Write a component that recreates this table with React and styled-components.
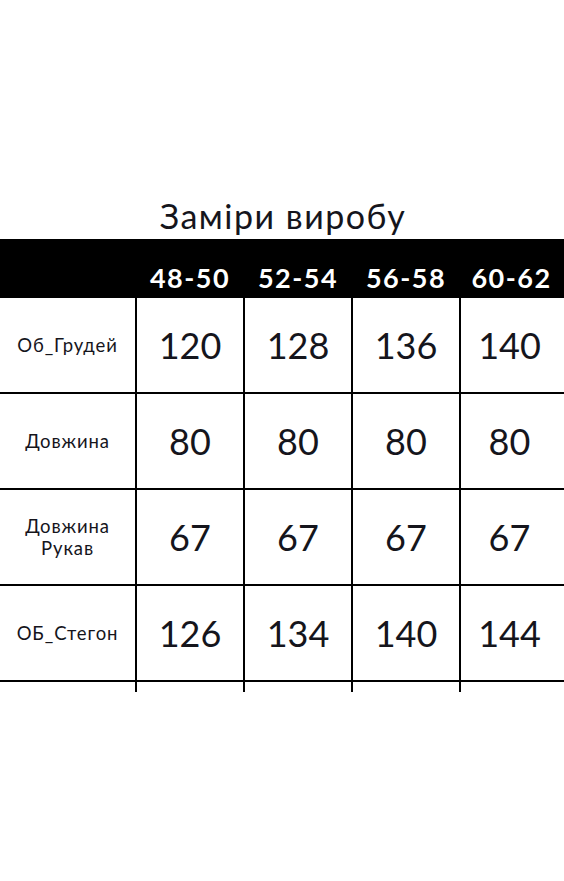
import React from "react";
import styled, { createGlobalStyle } from "styled-components";

const Global = createGlobalStyle`
  html, body { margin: 0; padding: 0; background: #ffffff; }
  body { font-family: Lato, "Open Sans", sans-serif; color: #15151c; }
`;

const Page = styled.div`
  width: 564px;
  height: 881px;
  display: flex;
  flex-direction: column;
  background: #fff;
  overflow: hidden;
`;

const Title = styled.h1`
  margin: 0;
  padding-top: 196px;
  height: 239px;
  flex: none;
  box-sizing: border-box;
  text-align: center;
  font-weight: 400;
  font-size: 34px;
  line-height: 40px;
  color: #15151c;
  padding-left: 2px;
  letter-spacing: 1.5px;
`;

const HeaderBar = styled.div`
  flex: none;
  height: 59px;
  background: #000;
  display: grid;
  grid-template-columns: 135px 108px 108px 108px 1fr;
  align-items: end;
  padding-bottom: 5px;
  box-sizing: border-box;
`;

const SizeCell = styled.div`
  color: #fff;
  font-weight: 700;
  font-size: 27px;
  line-height: 30px;
  text-align: center;
  letter-spacing: 1.5px;
  padding-left: ${(p) => (p.$last ? "0" : "2px")};
`;

const Row = styled.div`
  flex: none;
  display: grid;
  grid-template-columns: 135px 108px 108px 108px 1fr;
  height: ${(p) => p.$h || 96}px;
  box-sizing: border-box;
  border-bottom: ${(p) => (p.$tail ? "none" : "2px solid #000")};
`;

const LabelCell = styled.div`
  display: flex;
  flex-direction: column;
  align-items: center;
  justify-content: center;
  font-size: 18.5px;
  letter-spacing: 0.9px;
  line-height: 22px;
  text-align: center;
  color: #15151c;
`;

const ValueCell = styled.div`
  border-left: 2px solid #000;
  display: flex;
  align-items: center;
  justify-content: center;
  font-size: 36px;
  color: #15151c;
  ${(p) => (p.$last ? "padding-right: 6px;" : "")}
`;

const sizes = ["48-50", "52-54", "56-58", "60-62"];
const rows = [
  { label: ["Об_Грудей"], values: ["120", "128", "136", "140"] },
  { label: ["Довжина"], values: ["80", "80", "80", "80"] },
  { label: ["Довжина", "Рукав"], values: ["67", "67", "67", "67"] },
  { label: ["ОБ_Стегон"], values: ["126", "134", "140", "144"] },
];

export default function App() {
  return (
    <Page>
      <Global />
      <Title>Заміри виробу</Title>
      <HeaderBar>
        <div />
        {sizes.map((s, i) => (
          <SizeCell key={s} $last={i === sizes.length - 1}>
            {s}
          </SizeCell>
        ))}
      </HeaderBar>
      {rows.map((r) => (
        <Row key={r.label.join(" ")}>
          <LabelCell>
            {r.label.map((l) => (
              <span key={l}>{l}</span>
            ))}
          </LabelCell>
          {r.values.map((v, i) => (
            <ValueCell key={i} $last={i === 3}>
              {v}
            </ValueCell>
          ))}
        </Row>
      ))}
      <Row $tail $h={10}>
        <div />
        <ValueCell />
        <ValueCell />
        <ValueCell />
        <ValueCell />
      </Row>
    </Page>
  );
}
